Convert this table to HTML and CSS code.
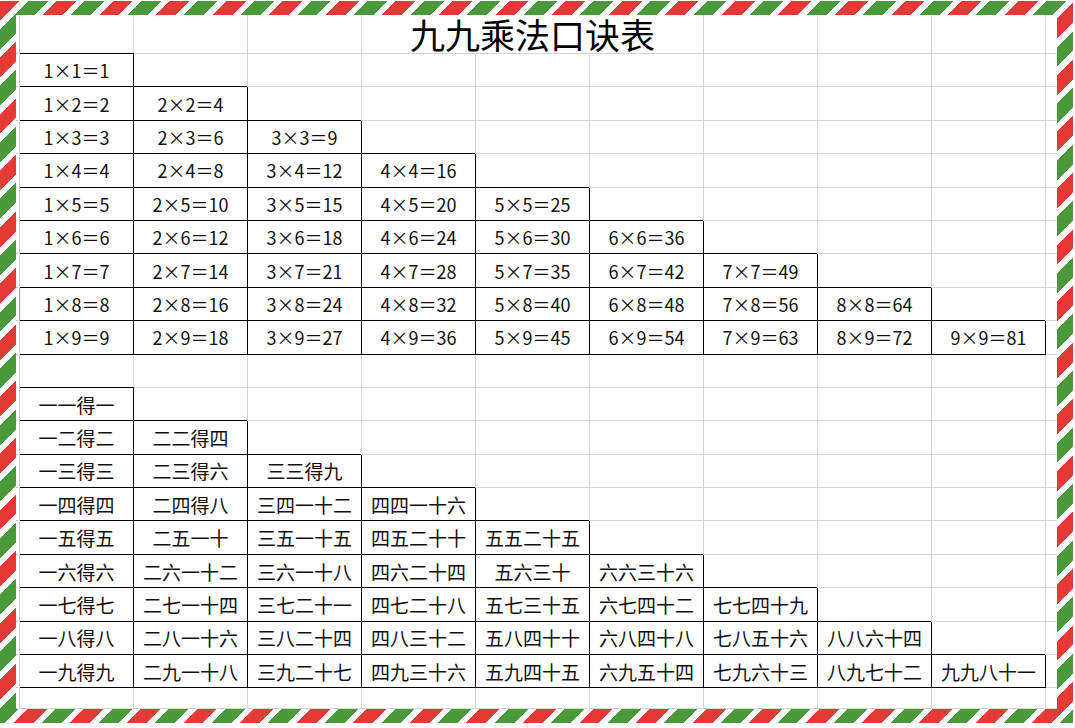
FILE: index.html
```html
<!DOCTYPE html>
<html lang="zh">
<head>
<meta charset="utf-8">
<title>九九乘法口诀表</title>
<link rel="stylesheet" href="styles.css">
</head>
<body>
<div class="frame">
<div class="sheet">
<div class="grid">
<!-- title row -->
<div class="c s"></div><div class="c"></div><div class="c"></div><div class="c"></div><div class="c title">九九乘法口诀表</div><div class="c"></div><div class="c"></div><div class="c"></div><div class="c e"></div>
<!-- 1 -->
<div class="c s"></div><div class="c f a n">1×1＝1</div><div class="c"></div><div class="c"></div><div class="c"></div><div class="c"></div><div class="c"></div><div class="c"></div><div class="c"></div><div class="c"></div><div class="c e"></div>
<!-- 2 -->
<div class="c s"></div><div class="c f a n">1×2＝2</div><div class="c f n">2×2＝4</div><div class="c"></div><div class="c"></div><div class="c"></div><div class="c"></div><div class="c"></div><div class="c"></div><div class="c"></div><div class="c e"></div>
<!-- 3 -->
<div class="c s"></div><div class="c f a n">1×3＝3</div><div class="c f n">2×3＝6</div><div class="c f n">3×3＝9</div><div class="c"></div><div class="c"></div><div class="c"></div><div class="c"></div><div class="c"></div><div class="c"></div><div class="c e"></div>
<!-- 4 -->
<div class="c s"></div><div class="c f a n">1×4＝4</div><div class="c f n">2×4＝8</div><div class="c f n">3×4＝12</div><div class="c f n">4×4＝16</div><div class="c"></div><div class="c"></div><div class="c"></div><div class="c"></div><div class="c"></div><div class="c e"></div>
<!-- 5 -->
<div class="c s"></div><div class="c f a n">1×5＝5</div><div class="c f n">2×5＝10</div><div class="c f n">3×5＝15</div><div class="c f n">4×5＝20</div><div class="c f n">5×5＝25</div><div class="c"></div><div class="c"></div><div class="c"></div><div class="c"></div><div class="c e"></div>
<!-- 6 -->
<div class="c s"></div><div class="c f a n">1×6＝6</div><div class="c f n">2×6＝12</div><div class="c f n">3×6＝18</div><div class="c f n">4×6＝24</div><div class="c f n">5×6＝30</div><div class="c f n">6×6＝36</div><div class="c"></div><div class="c"></div><div class="c"></div><div class="c e"></div>
<!-- 7 -->
<div class="c s"></div><div class="c f a n">1×7＝7</div><div class="c f n">2×7＝14</div><div class="c f n">3×7＝21</div><div class="c f n">4×7＝28</div><div class="c f n">5×7＝35</div><div class="c f n">6×7＝42</div><div class="c f n">7×7＝49</div><div class="c"></div><div class="c"></div><div class="c e"></div>
<!-- 8 -->
<div class="c s sel"></div><div class="c f a n">1×8＝8</div><div class="c f n">2×8＝16</div><div class="c f n">3×8＝24</div><div class="c f n">4×8＝32</div><div class="c f n">5×8＝40</div><div class="c f n">6×8＝48</div><div class="c f n">7×8＝56</div><div class="c f n">8×8＝64</div><div class="c"></div><div class="c e"></div>
<!-- 9 -->
<div class="c s"></div><div class="c f a n">1×9＝9</div><div class="c f n">2×9＝18</div><div class="c f n">3×9＝27</div><div class="c f n">4×9＝36</div><div class="c f n">5×9＝45</div><div class="c f n">6×9＝54</div><div class="c f n">7×9＝63</div><div class="c f n">8×9＝72</div><div class="c f n">9×9＝81</div><div class="c e"></div>
<!-- empty -->
<div class="c s"></div><div class="c"></div><div class="c"></div><div class="c"></div><div class="c"></div><div class="c"></div><div class="c"></div><div class="c"></div><div class="c"></div><div class="c"></div><div class="c e"></div>
<!-- cn 1 -->
<div class="c s"></div><div class="c f a">一一得一</div><div class="c"></div><div class="c"></div><div class="c"></div><div class="c"></div><div class="c"></div><div class="c"></div><div class="c"></div><div class="c"></div><div class="c e"></div>
<!-- cn 2 -->
<div class="c s"></div><div class="c f a">一二得二</div><div class="c f">二二得四</div><div class="c"></div><div class="c"></div><div class="c"></div><div class="c"></div><div class="c"></div><div class="c"></div><div class="c"></div><div class="c e"></div>
<!-- cn 3 -->
<div class="c s"></div><div class="c f a">一三得三</div><div class="c f">二三得六</div><div class="c f">三三得九</div><div class="c"></div><div class="c"></div><div class="c"></div><div class="c"></div><div class="c"></div><div class="c"></div><div class="c e"></div>
<!-- cn 4 -->
<div class="c s"></div><div class="c f a">一四得四</div><div class="c f">二四得八</div><div class="c f">三四一十二</div><div class="c f">四四一十六</div><div class="c"></div><div class="c"></div><div class="c"></div><div class="c"></div><div class="c"></div><div class="c e"></div>
<!-- cn 5 -->
<div class="c s"></div><div class="c f a">一五得五</div><div class="c f">二五一十</div><div class="c f">三五一十五</div><div class="c f">四五二十十</div><div class="c f">五五二十五</div><div class="c"></div><div class="c"></div><div class="c"></div><div class="c"></div><div class="c e"></div>
<!-- cn 6 -->
<div class="c s"></div><div class="c f a">一六得六</div><div class="c f">二六一十二</div><div class="c f">三六一十八</div><div class="c f">四六二十四</div><div class="c f">五六三十</div><div class="c f">六六三十六</div><div class="c"></div><div class="c"></div><div class="c"></div><div class="c e"></div>
<!-- cn 7 -->
<div class="c s"></div><div class="c f a">一七得七</div><div class="c f">二七一十四</div><div class="c f">三七二十一</div><div class="c f">四七二十八</div><div class="c f">五七三十五</div><div class="c f">六七四十二</div><div class="c f">七七四十九</div><div class="c"></div><div class="c"></div><div class="c e"></div>
<!-- cn 8 -->
<div class="c s"></div><div class="c f a">一八得八</div><div class="c f">二八一十六</div><div class="c f">三八二十四</div><div class="c f">四八三十二</div><div class="c f">五八四十十</div><div class="c f">六八四十八</div><div class="c f">七八五十六</div><div class="c f">八八六十四</div><div class="c"></div><div class="c e"></div>
<!-- cn 9 -->
<div class="c s"></div><div class="c f a">一九得九</div><div class="c f">二九一十八</div><div class="c f">三九二十七</div><div class="c f">四九三十六</div><div class="c f">五九四十五</div><div class="c f">六九五十四</div><div class="c f">七九六十三</div><div class="c f">八九七十二</div><div class="c f">九九八十一</div><div class="c e"></div>
<!-- remainder -->
<div class="c s"></div><div class="c"></div><div class="c"></div><div class="c"></div><div class="c"></div><div class="c"></div><div class="c"></div><div class="c"></div><div class="c"></div><div class="c"></div><div class="c e"></div>
</div>
</div>
</div>
</body>
</html>
```
FILE: styles.css
```css
html, body {
  margin: 0;
  padding: 0;
  background: #fff;
}
body {
  width: 1075px;
  height: 728px;
  overflow: hidden;
  font-family: "Noto Sans CJK SC", "Noto Sans", sans-serif;
  color: #111;
}
.frame {
  margin: 1px 2px 5px 0;
  padding: 14px 16px;
  height: 694px;
  background: repeating-linear-gradient(135deg,
    #e53a35 0 14px,
    #ffffff 14px 20px,
    #4a9a3c 20px 34px,
    #ffffff 34px 40px);
}
.sheet {
  background: #fff;
  height: 694px;
}
.grid {
  display: grid;
  grid-template-columns: 4px repeat(9, 114px) 11px;
  grid-template-rows: 39px repeat(19, 33.4px) 1fr;
  height: 694px;
}
.c {
  box-sizing: border-box;
  border-right: 1px solid #d6d6d6;
  border-bottom: 1px solid #d6d6d6;
  display: flex;
  align-items: center;
  justify-content: center;
  font-size: 19px;
  line-height: 1;
  white-space: nowrap;
}
.n {
  font-size: 18px;
}
.e {
  border-right: none;
}
.sel {
  border-right-color: #7bb661;
}
.f {
  border-right-color: #000;
  border-bottom-color: #000;
  box-shadow: -1px -1px 0 #000;
}
.f.a {
  box-shadow: 0 -1px 0 #000;
}
.title {
  grid-column: span 3;
  align-items: flex-end;
  font-size: 35px;
  line-height: 36px;
  padding-bottom: 1px;
  color: #000;
}
```
